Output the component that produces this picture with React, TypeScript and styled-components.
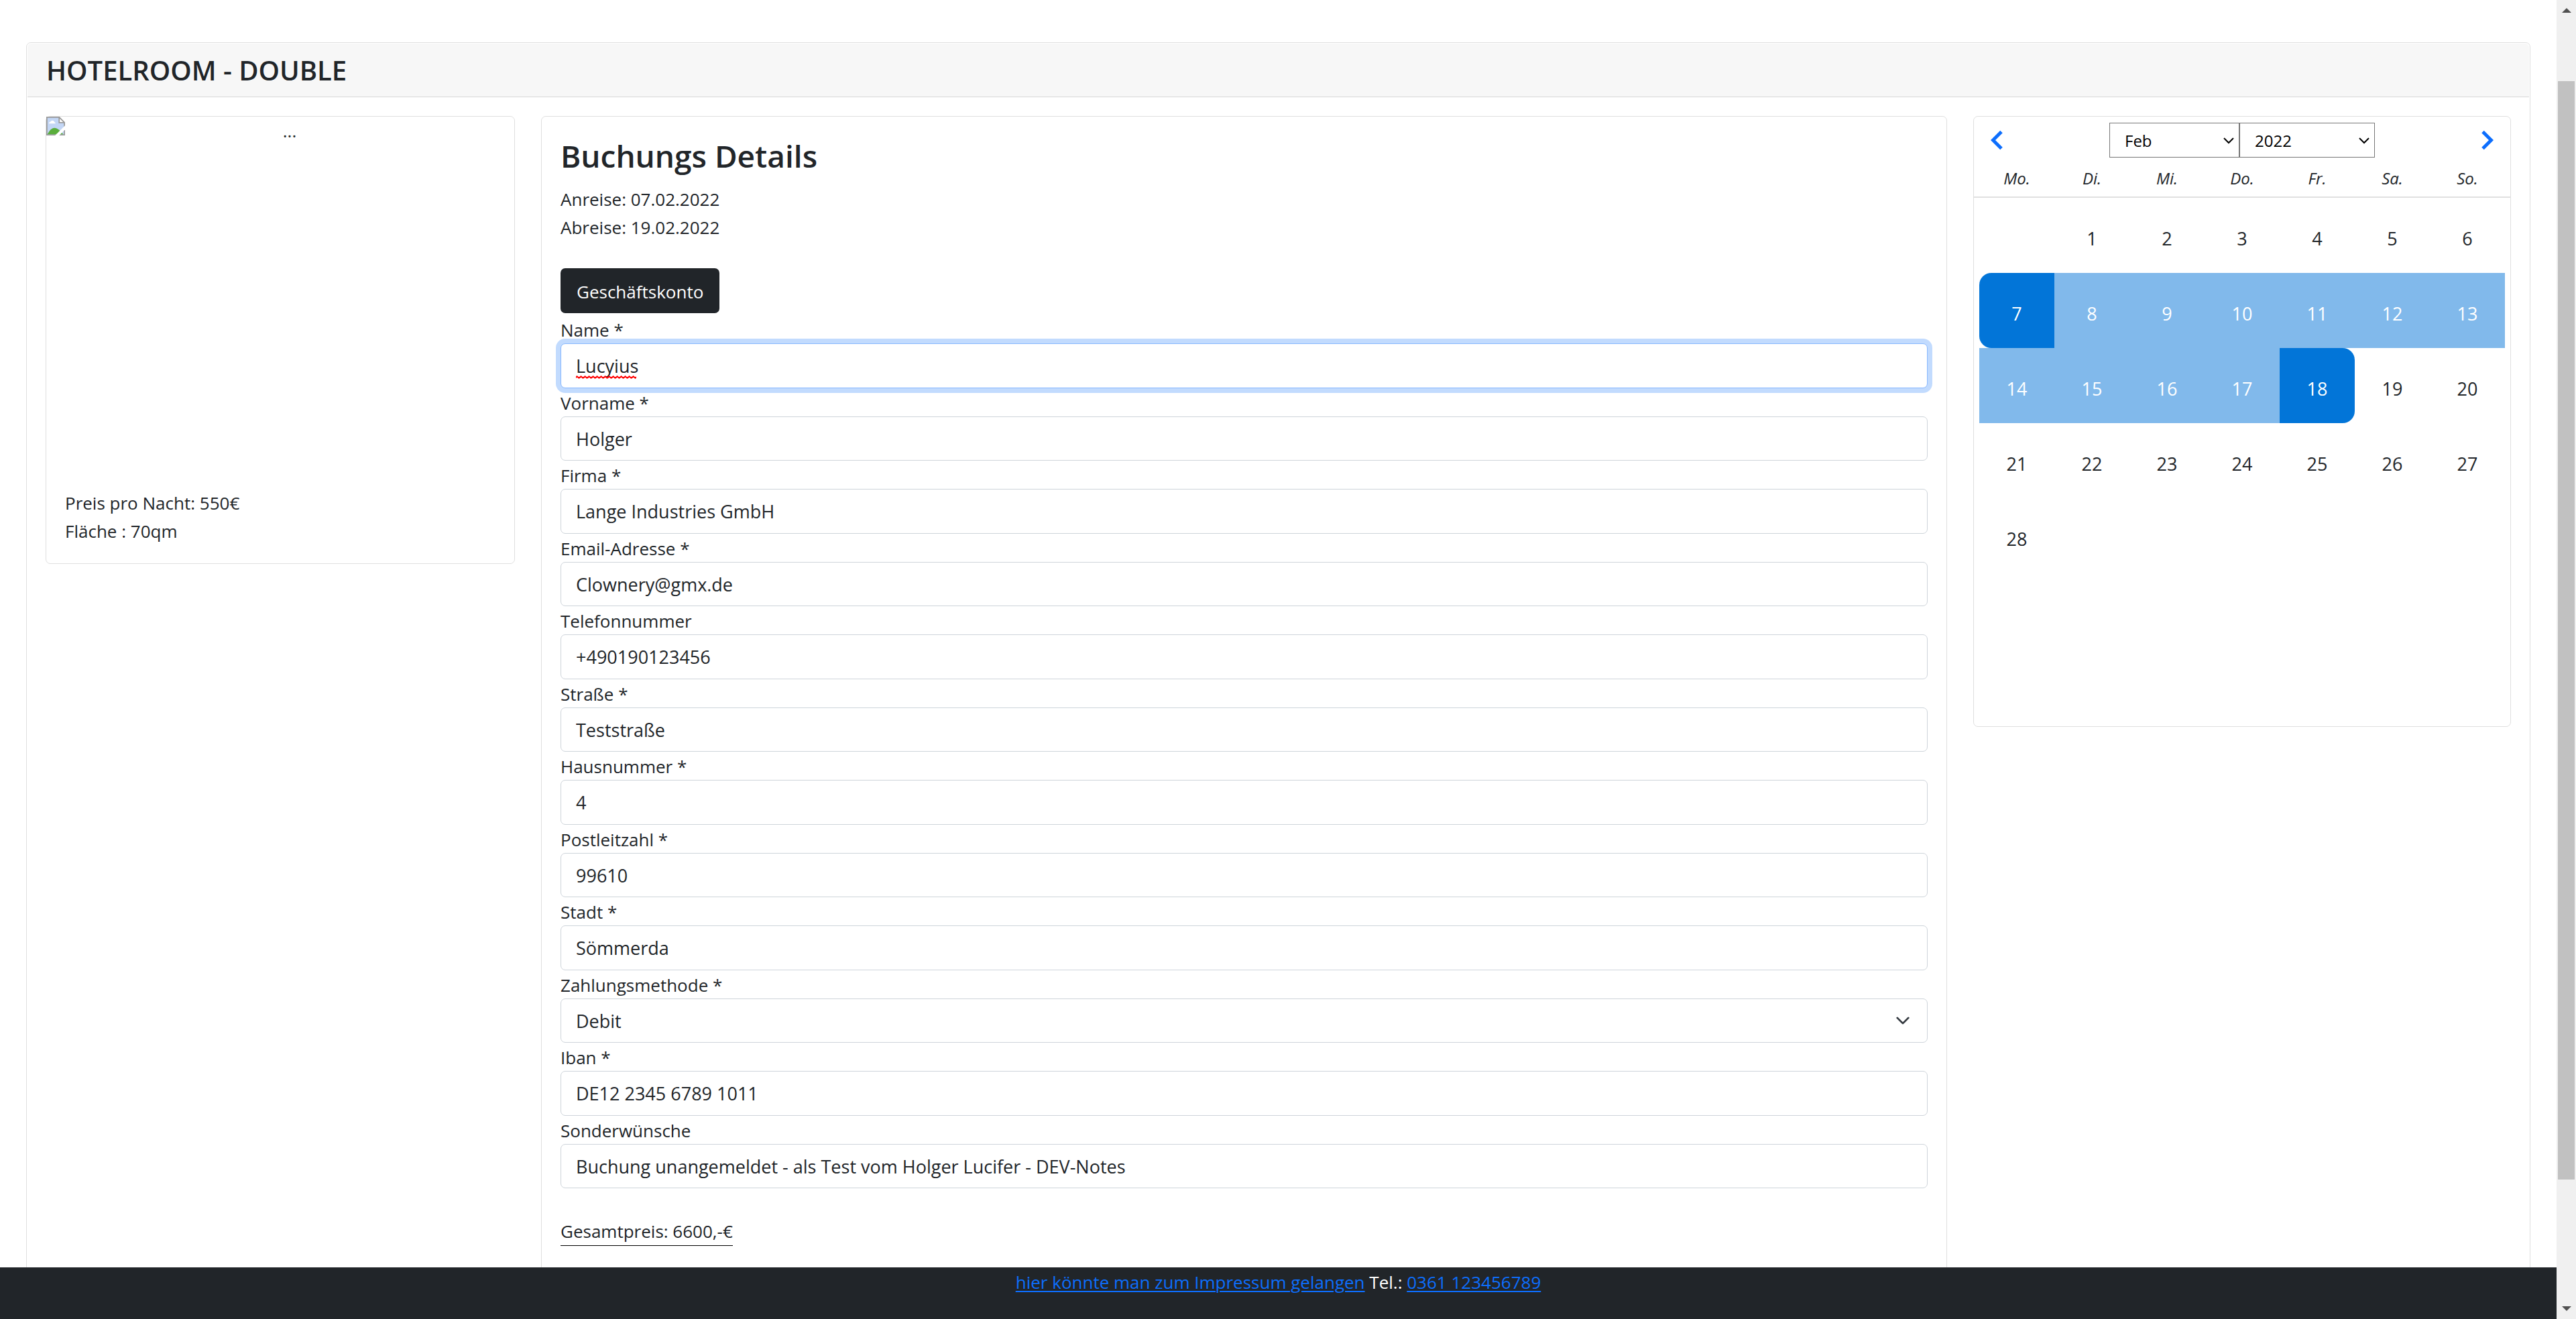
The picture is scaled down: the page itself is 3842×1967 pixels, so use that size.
import React from "react";
import styled, { createGlobalStyle, css } from "styled-components";

const GlobalStyle = createGlobalStyle`
  *, *::before, *::after { box-sizing: border-box; }
  html, body, #root { height: 100%; }
  body {
    margin: 0;
    overflow: hidden;
    background: #fff;
    color: #212529;
    font-family: "Open Sans", "Noto Sans", sans-serif;
    font-size: 26px;
    line-height: 42px;
  }
  input, select, button { font: inherit; color: inherit; }
`;

const Shell = styled.div`
  display: flex;
  height: 100vh;
`;

const Page = styled.div`
  flex: 1;
  min-width: 0;
  display: flex;
  flex-direction: column;
`;

const Main = styled.main`
  flex: 1;
  min-height: 0;
  overflow: hidden;
  padding: 63px 39px 0;
`;

const Card = styled.section`
  border: 1px solid #dfdfdf;
  border-radius: 7px;
  background: #fff;
`;

const CardHeader = styled.header`
  margin: 1px 1px 0;
  padding: 14px 28px;
  background: #f7f7f7;
  border-bottom: 1px solid #d8d8d8;
  border-radius: 6px 6px 0 0;
`;

const RoomTitle = styled.h1`
  margin: 0;
  font-size: 40px;
  line-height: 51px;
  font-weight: 600;
`;

const Columns = styled.div`
  display: grid;
  grid-template-columns: 700fr 2097fr 802fr;
  gap: 39px;
  align-items: start;
  padding: 28px;
`;

const Picture = styled.div`
  display: flex;
  align-items: flex-start;
  height: 526px;
`;

const AltText = styled.span`
  flex: 1;
  text-align: center;
`;

const RoomFacts = styled.div`
  padding: 28px;
`;

const line = css`
  padding-top: 2px;
  line-height: 40px;
`;

const Line = styled.p`
  ${line}
  margin: 0;
`;

const DetailsCard = styled(Card)`
  padding: 28px 28px 112px;
`;

const DetailsTitle = styled.h2`
  margin: 0 0 14px;
  padding-top: 2px;
  font-size: 46px;
  line-height: 57px;
  font-weight: 600;
`;

const AccountButton = styled.button`
  display: block;
  height: 67px;
  margin: 41px 0 3px;
  padding: 2px 24px 0;
  border: 0;
  border-radius: 7px;
  background: #212529;
  color: #fff;
`;

const Fields = styled.form`
  display: grid;
  grid-auto-rows: 1fr;
  min-height: 1302px;
`;

const Field = styled.div`
  display: flex;
  flex-direction: column;
`;

const FieldLabel = styled.label`
  ${line}
`;

const control = css`
  flex: 1;
  width: 100%;
  padding: 2px 22px 0;
  border: 1px solid #ced4da;
  border-radius: 7px;
  background: #fff;
  font-size: 27px;
  outline: none;
`;

const TextInput = styled.input<{ $active?: boolean }>`
  ${control}
  ${(p) =>
    p.$active &&
    css`
      border-color: #86b7fe;
      box-shadow: 0 0 0 7px #c2dbfe;
    `}
`;

const Overlay = styled.div`
  position: relative;
  flex: 1;
  display: flex;
`;

const PlainSelect = styled.select`
  ${control}
  appearance: none;
`;

const MethodChevron = styled.svg`
  position: absolute;
  right: 26px;
  top: 50%;
  margin-top: -11px;
  pointer-events: none;
`;

const SpellingMark = styled.svg`
  position: absolute;
  left: 23px;
  bottom: 14px;
  pointer-events: none;
`;

const Total = styled.p`
  ${line}
  width: fit-content;
  margin: 42px 0 0;
  padding-bottom: 1px;
  border-bottom: 1px solid #000;
`;

const CalendarCard = styled(Card)`
  min-height: 911px;
`;

const CalendarHead = styled.div`
  display: flex;
  align-items: center;
  justify-content: space-between;
  padding: 9px 8px 8px;
`;

const ArrowButton = styled.button`
  display: flex;
  align-items: center;
  justify-content: center;
  width: 52px;
  height: 52px;
  padding: 0;
  border: 0;
  background: none;
  color: #0d6efd;
`;

const Pickers = styled.div`
  display: flex;
`;

const Picker = styled.div<{ $width: number }>`
  position: relative;
  width: ${(p) => p.$width}px;
  height: 52px;
`;

const PickerSelect = styled.select`
  width: 100%;
  height: 100%;
  padding: 2px 22px 0;
  border: 1px solid #767676;
  border-radius: 0;
  background: #fff;
  color: #000;
  font-size: 24px;
  appearance: none;
`;

const PickerChevron = styled.svg`
  position: absolute;
  right: 8px;
  top: 21px;
  pointer-events: none;
`;

const Month = styled.table`
  width: 100%;
  border-collapse: collapse;
  table-layout: fixed;
  font-size: 27px;
`;

const MonthFrame = styled.div`
  padding: 0 8px;
`;

const WeekFrame = styled.div`
  padding: 0 8px;
  border-bottom: 2px solid #e0e0e0;
`;

const Weekdays = styled.div`
  display: grid;
  grid-template-columns: repeat(7, 1fr);
  height: 50px;
  line-height: 46px;
  font-size: 24px;
  font-style: italic;
  text-align: center;
`;

const Day = styled.td<{ $kind?: "start" | "mid" | "end" }>`
  height: 112px;
  padding: 10px 0 0;
  text-align: center;
  ${(p) =>
    p.$kind &&
    css`
      color: #fff;
      background: ${p.$kind === "mid" ? "#81b9eb" : "#0275d8"};
    `}
  ${(p) => p.$kind === "start" && "border-radius: 18px 0 0 18px;"}
  ${(p) => p.$kind === "end" && "border-radius: 0 18px 18px 0;"}
`;

const Footer = styled.footer`
  flex: none;
  height: 77px;
  background: #212529;
  color: #fff;
  text-align: center;
`;

const FooterLink = styled.a`
  color: #0d6efd;
  text-decoration: underline 2px;
  text-underline-offset: 3px;
`;

const ScrollTrack = styled.div`
  flex: none;
  display: flex;
  flex-direction: column;
  align-items: center;
  justify-content: space-between;
  width: 29px;
  padding: 12px 2px;
  background: #f0f0f0;
`;

const ScrollSpace = styled.div`
  flex: 1;
  display: flex;
  flex-direction: column;
  align-self: stretch;
  padding: 102px 0 189px;
`;

const ScrollThumb = styled.div`
  flex: 1;
  background: #c1c1c1;
`;

const BrokenImage = () => (
  <svg width="28" height="28" viewBox="0 0 16 16" aria-hidden="true">
    <path d="M.5 .5H11L15.500 5V15.500H.5z" fill="#c3d6f5" stroke="#9a9a9a" />
    <path d="M11 .5V5H15.500z" fill="#fff" stroke="#9a9a9a" />
    <path d="M2.300 5.800a1.500 1.500 0 0 1 1.300-1.500 1.800 1.800 0 0 1 3.400.3 1.200 1.200 0 0 1 .8 1.200z" fill="#fff" />
    <path d="M1 15c1.500-3 3.500-5.500 6-5.500S12 12 14.500 15z" fill="#5aae3c" />
    <path d="M16 7.500L7.500 16H11L16 11z" fill="#fff" />
  </svg>
);

const SmallChevron = () => (
  <PickerChevron width="16" height="12" viewBox="0 0 16 12" fill="none" stroke="#000" strokeWidth="2" aria-hidden="true">
    <path d="M1 2L8 9L15 2" />
  </PickerChevron>
);

const SpellingWave = () => (
  <SpellingMark width="90" height="5" aria-hidden="true">
    <defs>
      <pattern id="wave" width="6" height="5" patternUnits="userSpaceOnUse">
        <path d="M-1.500 4.500L1.500 1.200L4.500 3.800L7.500 1.200" fill="none" stroke="#f00" strokeWidth="1.800" />
      </pattern>
    </defs>
    <rect width="90" height="5" fill="url(#wave)" />
  </SpellingMark>
);

type FieldData = { id: string; label: string; value: string; select?: boolean; active?: boolean };

const fields: FieldData[] = [
  { id: "name", label: "Name *", value: "Lucyius", active: true },
  { id: "vorname", label: "Vorname *", value: "Holger" },
  { id: "firma", label: "Firma *", value: "Lange Industries GmbH" },
  { id: "email", label: "Email-Adresse *", value: "Clownery@gmx.de" },
  { id: "telefon", label: "Telefonnummer", value: "+490190123456" },
  { id: "strasse", label: "Straße *", value: "Teststraße" },
  { id: "hausnummer", label: "Hausnummer *", value: "4" },
  { id: "plz", label: "Postleitzahl *", value: "99610" },
  { id: "stadt", label: "Stadt *", value: "Sömmerda" },
  { id: "zahlung", label: "Zahlungsmethode *", value: "Debit", select: true },
  { id: "iban", label: "Iban *", value: "DE12 2345 6789 1011" },
  { id: "wunsch", label: "Sonderwünsche", value: "Buchung unangemeldet - als Test vom Holger Lucifer - DEV-Notes" },
];

const FormField = ({ id, label, value, select, active }: FieldData) => (
  <Field>
    <FieldLabel htmlFor={id}>{label}</FieldLabel>
    <Overlay>
      {select ? (
        <>
          <PlainSelect id={id} defaultValue={value}>
            <option>{value}</option>
          </PlainSelect>
          <MethodChevron width="22" height="22" viewBox="0 0 16 16" fill="none" stroke="#343a40" strokeWidth="2" strokeLinecap="round" strokeLinejoin="round" aria-hidden="true">
            <path d="M2 5l6 6 6-6" />
          </MethodChevron>
        </>
      ) : (
        <TextInput id={id} defaultValue={value} $active={active} spellCheck={false} />
      )}
      {active && <SpellingWave />}
    </Overlay>
  </Field>
);

const weekdays = ["Mo.", "Di.", "Mi.", "Do.", "Fr.", "Sa.", "So."];
const firstOffset = 1;
const daysInMonth = 28;
const stayStart = 7;
const stayEnd = 18;

const weeks = Array.from({ length: 5 }, (_, w) =>
  weekdays.map((_, d) => {
    const day = w * 7 + d - firstOffset + 1;
    return day >= 1 && day <= daysInMonth ? day : null;
  })
);

const kindOf = (day: number | null) => {
  if (day === null || day < stayStart || day > stayEnd) return undefined;
  if (day === stayStart) return "start" as const;
  return day === stayEnd ? ("end" as const) : ("mid" as const);
};

const Calendar = () => (
  <CalendarCard>
    <CalendarHead>
      <ArrowButton type="button" aria-label="Vorheriger Monat">
        <svg width="18" height="30" viewBox="0 0 18 30" fill="none" stroke="currentColor" strokeWidth="5" aria-hidden="true">
          <path d="M16 2.500L3.500 15L16 27.500" />
        </svg>
      </ArrowButton>
      <Pickers>
        <Picker $width={194}>
          <PickerSelect aria-label="Monat" defaultValue="Feb">
            <option>Feb</option>
          </PickerSelect>
          <SmallChevron />
        </Picker>
        <Picker $width={202}>
          <PickerSelect aria-label="Jahr" defaultValue="2022">
            <option>2022</option>
          </PickerSelect>
          <SmallChevron />
        </Picker>
      </Pickers>
      <ArrowButton type="button" aria-label="Nächster Monat">
        <svg width="18" height="30" viewBox="0 0 18 30" fill="none" stroke="currentColor" strokeWidth="5" aria-hidden="true">
          <path d="M2 2.500L14.500 15L2 27.500" />
        </svg>
      </ArrowButton>
    </CalendarHead>
    <WeekFrame>
      <Weekdays>
        {weekdays.map((d) => (
          <span key={d}>{d}</span>
        ))}
      </Weekdays>
    </WeekFrame>
    <MonthFrame>
      <Month aria-label="Februar 2022">
        <tbody>
          {weeks.map((week, w) => (
            <tr key={w}>
              {week.map((day, d) => (
                <Day key={d} $kind={kindOf(day)}>
                  {day}
                </Day>
              ))}
            </tr>
          ))}
        </tbody>
      </Month>
    </MonthFrame>
  </CalendarCard>
);

export default function App() {
  return (
    <Shell>
      <GlobalStyle />
      <Page>
        <Main>
          <Card>
            <CardHeader>
              <RoomTitle>HOTELROOM - DOUBLE</RoomTitle>
            </CardHeader>
            <Columns>
              <Card>
                <Picture>
                  <BrokenImage />
                  <AltText>...</AltText>
                </Picture>
                <RoomFacts>
                  <Line>Preis pro Nacht: 550€</Line>
                  <Line>Fläche : 70qm</Line>
                </RoomFacts>
              </Card>
              <DetailsCard>
                <DetailsTitle>Buchungs Details</DetailsTitle>
                <Line>Anreise: 07.02.2022</Line>
                <Line>Abreise: 19.02.2022</Line>
                <AccountButton type="button">Geschäftskonto</AccountButton>
                <Fields>
                  {fields.map((f) => (
                    <FormField key={f.id} {...f} />
                  ))}
                </Fields>
                <Total>Gesamtpreis: 6600,-€</Total>
              </DetailsCard>
              <Calendar />
            </Columns>
          </Card>
        </Main>
        <Footer>
          <Line>
            <FooterLink href="#impressum">hier könnte man zum Impressum gelangen</FooterLink> Tel.:{" "}
            <FooterLink href="tel:0361123456789">0361 123456789</FooterLink>
          </Line>
        </Footer>
      </Page>
      <ScrollTrack aria-hidden="true">
        <svg width="14" height="7" viewBox="0 0 14 7">
          <path d="M7 0L14 7H0z" fill="#505050" />
        </svg>
        <ScrollSpace>
          <ScrollThumb />
        </ScrollSpace>
        <svg width="14" height="7" viewBox="0 0 14 7">
          <path d="M0 0H14L7 7z" fill="#505050" />
        </svg>
      </ScrollTrack>
    </Shell>
  );
}
